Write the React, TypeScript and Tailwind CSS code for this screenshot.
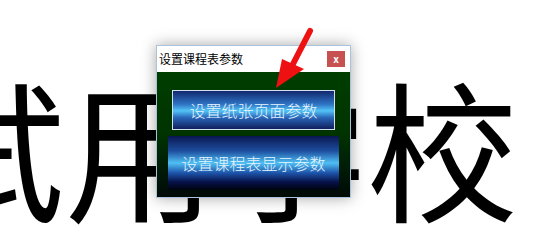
import React from 'react'

const cjk = { fontFamily: '"Noto Sans CJK SC", "Noto Sans", sans-serif' }

function CloseButton() {
  return (
    <div className="w-[18px] h-[16px] bg-[#c75050] flex items-center justify-center text-white text-[10px] font-bold leading-none">
      x
    </div>
  )
}

function Dialog() {
  return (
    <div
      className="absolute left-[156px] top-[45px] w-[195px] h-[153px] flex flex-col border border-[#a9c3de] shadow-[0_0_14px_rgba(0,0,0,0.35)]"
      style={cjk}
    >
      {/* Title bar */}
      <div className="h-[26px] bg-white flex items-center justify-between pl-[2px] pr-[5px]">
        <span className="text-[12px] text-black leading-none">设置课程表参数</span>
        <CloseButton />
      </div>

      {/* Body */}
      <div className="flex-1 flex flex-col items-center bg-gradient-to-b from-[#003e00] via-[#003300] to-[#000a06]">
        <button className="mt-[18px] w-[163px] h-[40px] border border-[#d4e0ee] bg-[linear-gradient(to_bottom,#12296e_0%,#2f74c4_35%,#52c4f6_52%,#2a66b8_70%,#0f1f5c_100%)] text-[#e6f4ff] text-[16px] font-light leading-none">
          设置纸张页面参数
        </button>
        <button className="mt-[6px] w-[171px] h-[54px] bg-[linear-gradient(to_bottom,#0a1650_0%,#1e4fa0_28%,#4fc0f4_50%,#1e56ac_68%,#07124a_85%,#00030e_100%)] text-[#e6f4ff] text-[16px] font-light leading-none">
          设置课程表显示参数
        </button>
      </div>
    </div>
  )
}

function Arrow() {
  return (
    <svg className="absolute left-0 top-0" width="541" height="248" viewBox="0 0 541 248">
      <line x1="310" y1="31" x2="293" y2="64" stroke="#ee1111" strokeWidth="6" strokeLinecap="round" />
      <polygon points="276,88 282,59 304,69" fill="#ee1111" />
    </svg>
  )
}

export default function App() {
  return (
    <div className="relative w-[541px] h-[248px] bg-white overflow-hidden">
      {/* Background text */}
      <div
        className="flex pt-[70px] ml-[-86px] text-[151px] font-normal leading-none text-black whitespace-nowrap"
        style={cjk}
      >
        试用学校
      </div>

      <Dialog />
      <Arrow />
    </div>
  )
}
